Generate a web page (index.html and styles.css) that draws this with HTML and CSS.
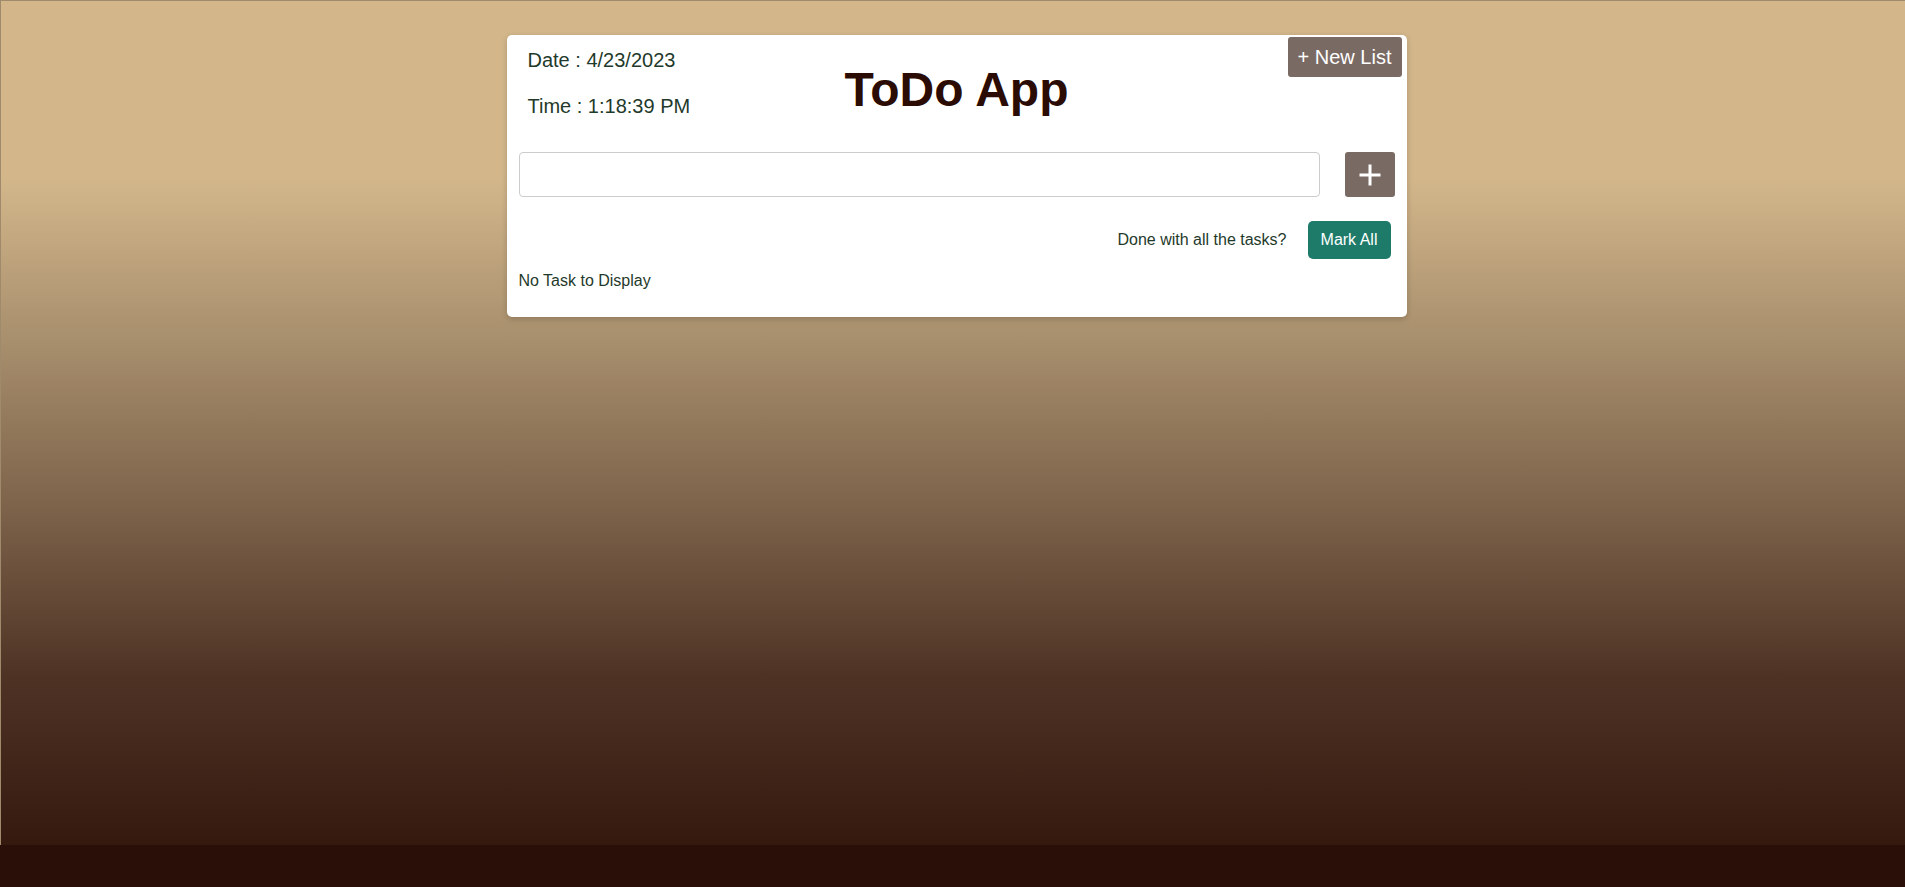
FILE: index.html
```html
<!DOCTYPE html>
<html>
<head>
<meta charset="utf-8">
<title>ToDo App</title>
<link rel="stylesheet" href="styles.css">
</head>
<body>
<div class="bg">
  <div class="card">
    <div class="header">
      <div class="dates">
        <p class="line">Date : 4/23/2023</p>
        <p class="line time">Time : 1:18:39 PM</p>
      </div>
      <h1 class="title">ToDo App</h1>
      <button class="new-list">+ New List</button>
    </div>
    <div class="input-row">
      <input class="task-input" type="text">
      <button class="add-btn" aria-label="Add">
        <svg width="24" height="24" viewBox="0 0 24 24"><path d="M12 1.5V22.5M1.5 12H22.5" stroke="#fff" stroke-width="3" fill="none"/></svg>
      </button>
    </div>
    <div class="mark-row">
      <span class="mark-text">Done with all the tasks?</span>
      <button class="mark-btn">Mark All</button>
    </div>
    <p class="empty">No Task to Display</p>
  </div>
</div>
</body>
</html>
```
FILE: styles.css
```css
html {
  background: #2a0e08;
}
body {
  margin: 0;
  font-family: "Liberation Sans", Arial, sans-serif;
}
.bg {
  height: 845px;
  border-top: 1px solid #a08a6c;
  border-left: 1px solid #a08a6c;
  background: linear-gradient(to bottom, #d3b78b 0, #d3b78b 21%, #a88f6d 40%, #7d634a 60%, #4e3325 80%, #35190f 100%);
  padding-top: 34px;
  padding-left: 7px;
  box-sizing: border-box;
}
.card {
  width: 900px;
  margin: 0 auto;
  background: #fff;
  border-radius: 5px;
  box-shadow: 0 2px 6px rgba(0, 0, 0, 0.18);
  padding: 14px 12px 27px;
  box-sizing: border-box;
}
.header {
  display: grid;
  grid-template-columns: 1fr auto 1fr;
  margin-bottom: 34px;
}
.dates {
  padding-left: 9px;
}
.line {
  margin: 0;
  font-size: 20px;
  line-height: 23px;
  color: #1f3a2b;
}
.time {
  margin-top: 23px;
}
.title {
  margin: 13px 0 0;
  font-size: 48px;
  line-height: 55px;
  font-weight: bold;
  color: #2a0c04;
}
.new-list {
  justify-self: end;
  align-self: start;
  margin-top: -12px;
  margin-right: -7px;
  width: 114px;
  height: 40px;
  border: none;
  border-radius: 3px;
  background: #7a6a64;
  color: #fff;
  font-family: "Liberation Sans", Arial, sans-serif;
  font-size: 20px;
  padding: 0;
}
.input-row {
  display: flex;
  gap: 25px;
}
.task-input {
  flex: 1;
  height: 45px;
  box-sizing: border-box;
  border: 1px solid #cccccc;
  border-radius: 4px;
  margin: 0;
}
.add-btn {
  width: 50px;
  height: 45px;
  border: none;
  border-radius: 3px;
  background: #7a6a64;
  display: flex;
  align-items: center;
  justify-content: center;
  padding: 0;
}
.mark-row {
  display: flex;
  justify-content: flex-end;
  align-items: center;
  gap: 21px;
  margin-top: 24px;
  padding-right: 4px;
}
.mark-text {
  font-size: 16px;
  color: #1f3a2b;
}
.mark-btn {
  width: 83px;
  height: 38px;
  border: none;
  border-radius: 5px;
  background: #1e7b6a;
  color: #fff;
  font-family: "Liberation Sans", Arial, sans-serif;
  font-size: 16px;
  padding: 0;
}
.empty {
  margin: 13px 0 0;
  font-size: 16px;
  line-height: 18px;
  color: #1f3a2b;
}
```
